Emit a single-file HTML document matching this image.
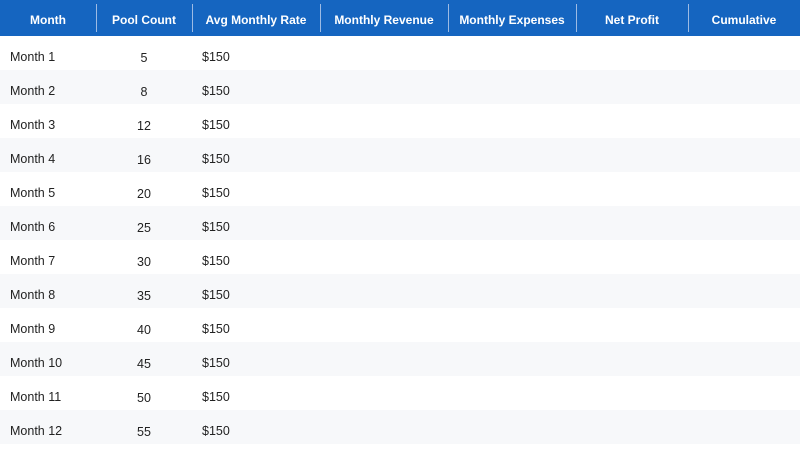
<!DOCTYPE html>
<html><head><style>
body{margin:0;width:800px;height:444px;overflow:hidden;background:#fff;font-family:"Liberation Sans",sans-serif;}
.h{position:absolute;top:0;left:0;width:800px;height:36px;background:#1565c0;}
.h div{position:absolute;top:0;height:36px;line-height:40px;color:#fff;font-size:12px;font-weight:bold;text-align:center;}
.d{position:absolute;top:4px;width:1px;height:28px;background:#9dbbe4;}
.r{position:absolute;left:0;width:800px;height:34px;font-size:12.5px;color:#222;}
.r span{position:absolute;top:0;line-height:42px;}
</style></head><body>
<div class="h">
<div style="left:0;width:96px">Month</div>
<div style="left:96px;width:96px">Pool Count</div>
<div style="left:192px;width:128px">Avg Monthly Rate</div>
<div style="left:320px;width:128px">Monthly Revenue</div>
<div style="left:448px;width:128px">Monthly Expenses</div>
<div style="left:576px;width:112px">Net Profit</div>
<div style="left:688px;width:112px">Cumulative</div>
<span class="d" style="left:96px"></span><span class="d" style="left:192px"></span><span class="d" style="left:320px"></span><span class="d" style="left:448px"></span><span class="d" style="left:576px"></span><span class="d" style="left:688px"></span>
</div>
<div id="rows"></div>
<script>
var c=[5,8,12,16,20,25,30,35,40,45,50,55],h='';
for(var i=0;i<12;i++){h+='<div class="r" style="top:'+(36+i*34)+'px;background:'+(i%2?'#f7f8fa':'#fff')+'"><span style="left:10px">Month '+(i+1)+'</span><span style="left:96px;width:96px;text-align:center;line-height:44px">'+c[i]+'</span><span style="left:202px">$150</span></div>';}
document.getElementById('rows').innerHTML=h;
</script>
</body></html>
